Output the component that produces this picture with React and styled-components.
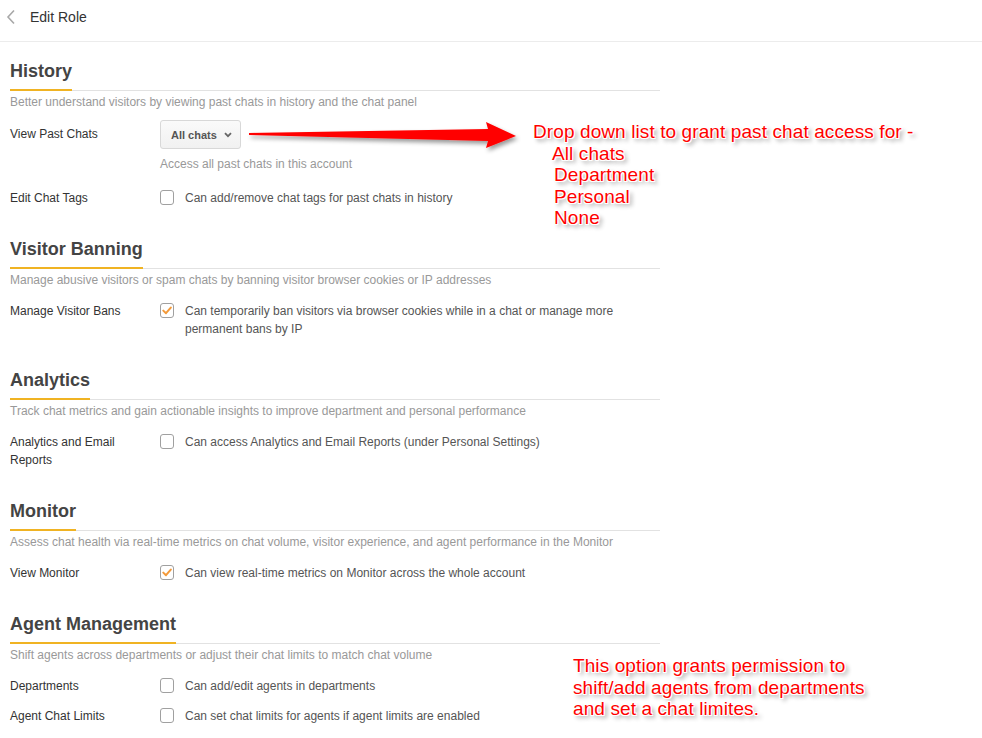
import React from 'react';
import styled, { createGlobalStyle } from 'styled-components';

const GlobalStyle = createGlobalStyle`
  html, body {
    margin: 0;
    padding: 0;
    background: #fff;
  }
  body {
    font-family: "Liberation Sans", Arial, sans-serif;
    color: #333;
  }
`;

const Page = styled.div`
  position: relative;
  width: 982px;
  min-height: 738px;
  overflow: hidden;
`;

const TopBar = styled.div`
  display: flex;
  align-items: center;
  height: 34px;
  padding: 0 0 7px 6px;
  border-bottom: 1px solid #ececec;
`;

const BackButton = styled.span`
  display: flex;
  align-items: center;
  width: 24px;
  height: 16px;
`;

const PageTitle = styled.span`
  font-size: 14px;
  color: #333;
`;

const Content = styled.div`
  width: 650px;
  padding: 0 0 40px 10px;
`;

const Section = styled.section`
  margin-top: ${p => (p.first ? '18px' : '31px')};
`;

const SectionHead = styled.div`
  display: flex;
  border-bottom: 1px solid #e2e2e2;
`;

const SectionTitle = styled.h2`
  margin: 0 0 -1px;
  padding-bottom: 7px;
  font-size: 18px;
  line-height: 22px;
  font-weight: bold;
  color: #444;
  border-bottom: 2px solid #f0b323;
`;

const SectionDesc = styled.p`
  margin: 2px 0 0;
  font-size: 12px;
  line-height: 18px;
  color: #999;
`;

const Rows = styled.div`
  display: flex;
  flex-direction: column;
  gap: 12px;
  margin-top: ${p => (p.tight ? '9px' : '13px')};
`;

const Row = styled.div`
  display: flex;
  align-items: flex-start;
`;

const RowLabel = styled.div`
  flex: 0 0 150px;
  font-size: 12px;
  line-height: ${p => (p.tall ? '29px' : '18px')};
  color: #333;
`;

const Control = styled.div`
  flex: 1;
  display: flex;
  flex-direction: column;
`;

const CheckLine = styled.label`
  display: flex;
  align-items: flex-start;
  font-size: 12px;
  line-height: 18px;
  color: #555;
`;

const Box = styled.span`
  flex: 0 0 auto;
  box-sizing: border-box;
  width: 14px;
  height: 15px;
  margin: 1px 11px 0 0;
  border: 1px solid #a0a0a0;
  border-radius: 3px;
  background: #fff;
  display: flex;
  align-items: center;
  justify-content: center;
`;

const Select = styled.button`
  display: flex;
  align-items: center;
  justify-content: space-between;
  box-sizing: border-box;
  width: 81px;
  height: 29px;
  padding: 0 8px 0 10px;
  border: 1px solid #d8d8d8;
  border-radius: 3px;
  background: linear-gradient(#fafafa, #f1f1f1);
  font-family: "Liberation Sans", Arial, sans-serif;
  font-size: 11px;
  font-weight: bold;
  color: #555;
`;

const HelpText = styled.div`
  margin: 6px 0 3px;
  font-size: 12px;
  line-height: 18px;
  color: #999;
`;

const Note = styled.div`
  position: absolute;
  left: ${p => p.x}px;
  top: ${p => p.y}px;
  font-family: "Liberation Sans", Arial, sans-serif;
  font-size: 19px;
  line-height: 21.5px;
  letter-spacing: 0.1px;
  color: #ff0000;
  white-space: nowrap;
  text-shadow: -1px -1px 0 #fff, 1px -1px 0 #fff, -1px 1px 0 #fff, 1px 1px 0 #fff,
    0 -1px 0 #fff, 0 1px 0 #fff, 3px 3px 4px rgba(0, 0, 0, 0.45);
`;

const NoteItem = styled.div`
  padding-left: ${p => p.indent}px;
`;

const Arrow = styled.svg`
  position: absolute;
  left: 240px;
  top: 112px;
  overflow: visible;
`;

const Check = ({ checked }) => (
  <Box>
    {checked && (
      <svg width="10" height="9" viewBox="0 0 10 9">
        <path d="M1.3 4.6 L4 7.2 L8.8 1.6" fill="none" stroke="#f39a3a" strokeWidth="2" strokeLinecap="round" strokeLinejoin="round" />
      </svg>
    )}
  </Box>
);

const CheckRow = ({ label, text, checked }) => (
  <Row>
    <RowLabel>{label}</RowLabel>
    <Control>
      <CheckLine>
        <Check checked={checked} />
        <span>{text}</span>
      </CheckLine>
    </Control>
  </Row>
);

const sections = [
  {
    title: 'Visitor Banning',
    desc: 'Manage abusive visitors or spam chats by banning visitor browser cookies or IP addresses',
    rows: [
      { label: 'Manage Visitor Bans', checked: true, text: 'Can temporarily ban visitors via browser cookies while in a chat or manage more permanent bans by IP' },
    ],
  },
  {
    title: 'Analytics',
    desc: 'Track chat metrics and gain actionable insights to improve department and personal performance',
    rows: [
      { label: 'Analytics and Email Reports', checked: false, text: 'Can access Analytics and Email Reports (under Personal Settings)' },
    ],
  },
  {
    title: 'Monitor',
    desc: 'Assess chat health via real-time metrics on chat volume, visitor experience, and agent performance in the Monitor',
    rows: [
      { label: 'View Monitor', checked: true, text: 'Can view real-time metrics on Monitor across the whole account' },
    ],
  },
  {
    title: 'Agent Management',
    desc: 'Shift agents across departments or adjust their chat limits to match chat volume',
    rows: [
      { label: 'Departments', checked: false, text: 'Can add/edit agents in departments' },
      { label: 'Agent Chat Limits', checked: false, text: 'Can set chat limits for agents if agent limits are enabled' },
    ],
  },
];

export default function App() {
  return (
    <Page>
      <GlobalStyle />
      <TopBar>
        <BackButton>
          <svg width="10" height="16" viewBox="0 0 10 16">
            <polyline points="8,1.5 2,8 8,14.5" fill="none" stroke="#a8a8a8" strokeWidth="1.6" />
          </svg>
        </BackButton>
        <PageTitle>Edit Role</PageTitle>
      </TopBar>

      <Content>
        <Section first>
          <SectionHead>
            <SectionTitle>History</SectionTitle>
          </SectionHead>
          <SectionDesc>Better understand visitors by viewing past chats in history and the chat panel</SectionDesc>
          <Rows tight>
            <Row>
              <RowLabel tall>View Past Chats</RowLabel>
              <Control>
                <div>
                  <Select>
                    All chats
                    <svg width="8" height="6" viewBox="0 0 8 6">
                      <path d="M1 1.2 L4 4.2 L7 1.2" fill="none" stroke="#666" strokeWidth="1.8" />
                    </svg>
                  </Select>
                </div>
                <HelpText>Access all past chats in this account</HelpText>
              </Control>
            </Row>
          </Rows>
          <Rows>
            <CheckRow label="Edit Chat Tags" checked={false} text="Can add/remove chat tags for past chats in history" />
          </Rows>
        </Section>

        {sections.map(s => (
          <Section key={s.title}>
            <SectionHead>
              <SectionTitle>{s.title}</SectionTitle>
            </SectionHead>
            <SectionDesc>{s.desc}</SectionDesc>
            <Rows>
              {s.rows.map(r => (
                <CheckRow key={r.label} {...r} />
              ))}
            </Rows>
          </Section>
        ))}
      </Content>

      <Arrow width="290" height="45" viewBox="0 0 290 45">
        <defs>
          <filter id="arrowShadow" x="-10%" y="-50%" width="130%" height="250%">
            <feDropShadow dx="2" dy="3" stdDeviation="2" floodColor="#000" floodOpacity="0.4" />
          </filter>
        </defs>
        <polygon
          points="9,21 248,17 246,10 276,24 246,36 248,29 9,23"
          fill="#ff0000"
          filter="url(#arrowShadow)"
        />
      </Arrow>

      <Note x={533} y={121}>
        <div>Drop down list to grant past chat access for -</div>
        <NoteItem indent={19}>All chats</NoteItem>
        <NoteItem indent={21}>Department</NoteItem>
        <NoteItem indent={21}>Personal</NoteItem>
        <NoteItem indent={21}>None</NoteItem>
      </Note>

      <Note x={573} y={655}>
        <div>This option grants permission to</div>
        <div>shift/add agents from departments</div>
        <div>and set a chat limites.</div>
      </Note>
    </Page>
  );
}
